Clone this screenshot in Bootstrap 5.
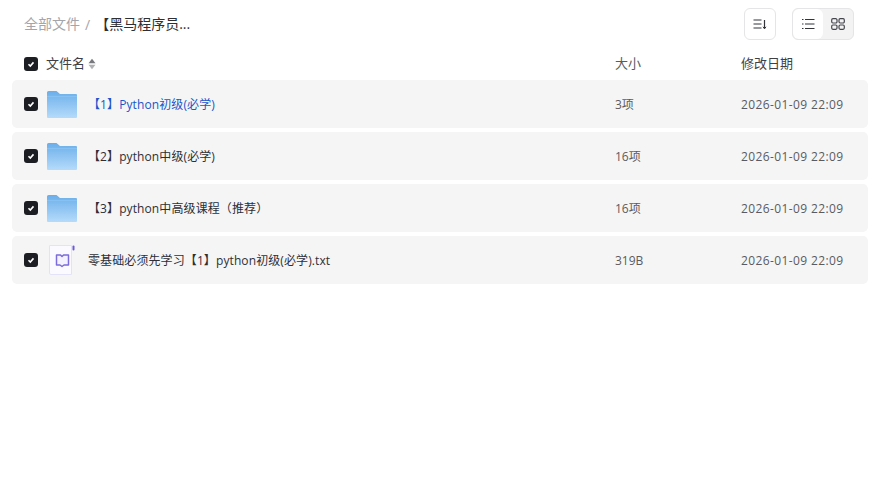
<!DOCTYPE html>
<html lang="zh-CN">
<head>
<meta charset="UTF-8">
<title>全部文件</title>
<link href="https://cdn.jsdelivr.net/npm/bootstrap@5.3.2/dist/css/bootstrap.min.css" rel="stylesheet">
<script src="https://cdn.jsdelivr.net/npm/bootstrap@5.3.2/dist/js/bootstrap.bundle.min.js"></script>
<style>
body { font-family: "Open Sans", "Noto Sans CJK SC", sans-serif; background: #fff; color: #2e2f35; font-size: 12px; }
.file-page { padding: 8px 10px 0 12px; }
.crumb-bar { height: 32px; padding-left: 12px; padding-right: 14px; font-size: 14px; margin-bottom: 8px; }
.crumb-root { color: #a4a5ab; padding-bottom: 2px; }
.crumb-sep { color: #a4a5ab; margin: 0 5px; }
.crumb-now { color: #2e2f35; padding-bottom: 2px; }
.tool-btn { width: 32px; height: 32px; border: 1px solid #e5e5e8; border-radius: 6px; background: #fff; margin-right: 16px; }
.view-group { width: 62px; height: 32px; border: 1px solid #e5e5e8; border-radius: 6px; background: #f3f3f4; overflow: hidden; }
.view-item { width: 30px; height: 30px; }
.view-on { background: #fff; border-radius: 6px; }
.head-row { height: 32px; padding-left: 12px; font-size: 13px; color: #3f4046; }
.file-row { height: 48px; padding-left: 12px; background: #f5f5f5; border-radius: 5px; margin-bottom: 4px; }
.tick { width: 14px; height: 14px; background: #1d1e24; border-radius: 3px; flex: none; }
.col-name { width: 591px; flex: none; }
.col-size { width: 126px; flex: none; color: #5a5b61; }
.col-date { color: #5a5b61; letter-spacing: .38px; }
.row-text { padding-top: 2px; }
.file-name { letter-spacing: .1px; padding-top: 2px; }
.name-gap { margin-left: 8px; }
.sort-mark { margin-left: 3px; }
.file-icon { width: 30px; height: 30px; margin-left: 9px; margin-right: 11px; flex: none; }
.is-link { color: #1a55c9; }
</style>
</head>
<body>
<div class="file-page">
  <div class="crumb-bar d-flex align-items-center">
    <span class="crumb-root">全部文件</span><span class="crumb-sep">/</span><span class="crumb-now">【黑马程序员...</span>
    <div class="ms-auto d-flex">
      <div class="tool-btn d-flex align-items-center justify-content-center">
        <svg width="16" height="16" viewBox="0 0 16 16" fill="none" stroke="#33343a" stroke-width="1.2"><path d="M1.500 4h8M1.500 8h8M1.500 12h8M12.500 4v8.500"/><path d="M11 10.800l1.500 2 1.500-2" stroke-width="1"/></svg>
      </div>
      <div class="view-group d-flex">
        <div class="view-item view-on d-flex align-items-center justify-content-center">
          <svg width="16" height="16" viewBox="0 0 16 16" fill="none" stroke="#33343a" stroke-width="1.2"><path d="M5 3.500h9.500M5 8h9.500M5 12.500h9.500M2 3.500h1.500M2 8h1.500M2 12.500h1.500"/></svg>
        </div>
        <div class="view-item d-flex align-items-center justify-content-center">
          <svg width="16" height="16" viewBox="0 0 16 16" fill="none" stroke="#45464c" stroke-width="1.2"><rect x="1.700" y="2.700" width="5.300" height="4.300" rx="1.200"/><rect x="9" y="2.700" width="5.300" height="4.300" rx="1.200"/><rect x="1.700" y="9" width="5.300" height="4.300" rx="1.200"/><rect x="9" y="9" width="5.300" height="4.300" rx="1.200"/></svg>
        </div>
      </div>
    </div>
  </div>

  <div class="head-row d-flex align-items-center">
    <div class="col-name d-flex align-items-center">
      <span class="tick d-flex align-items-center justify-content-center"><svg width="10" height="10" viewBox="0 0 10 10" fill="none" stroke="#fff" stroke-width="1.6"><path d="M2.500 5.200l1.800 1.800 3.200-3.600"/></svg></span>
      <span class="name-gap">文件名</span>
      <svg class="sort-mark" width="8" height="12" viewBox="0 0 8 12"><path d="M4 .8l3.500 4.400H.5z" fill="#77787d"/><path d="M4 11.200L.5 6.800h7z" fill="#b0b1b5"/></svg>
    </div>
    <div class="col-size">大小</div>
    <div>修改日期</div>
  </div>

  <div class="file-row d-flex align-items-center">
    <div class="col-name d-flex align-items-center">
      <span class="tick d-flex align-items-center justify-content-center"><svg width="10" height="10" viewBox="0 0 10 10" fill="none" stroke="#fff" stroke-width="1.6"><path d="M2.500 5.200l1.800 1.800 3.200-3.600"/></svg></span>
      <svg class="file-icon" viewBox="0 0 30 30"><defs><linearGradient id="fold1" x1="0" y1="0" x2="0" y2="1"><stop offset="0" stop-color="#6aaeea"/><stop offset="1" stop-color="#b5dbfa"/></linearGradient></defs><path d="M0 3.500Q0 2 1.500 2H9.500L13 5H29Q30 5 30 6V28Q30 29 29 29H1Q0 29 0 28Z" fill="url(#fold1)"/><path d="M0 7.500H30" stroke="#87c0f2" stroke-width="1"/></svg>
      <span class="file-name is-link">【1】Python初级(必学)</span>
    </div>
    <div class="col-size row-text">3项</div>
    <div class="col-date row-text">2026-01-09 22:09</div>
  </div>

  <div class="file-row d-flex align-items-center">
    <div class="col-name d-flex align-items-center">
      <span class="tick d-flex align-items-center justify-content-center"><svg width="10" height="10" viewBox="0 0 10 10" fill="none" stroke="#fff" stroke-width="1.6"><path d="M2.500 5.200l1.800 1.800 3.200-3.600"/></svg></span>
      <svg class="file-icon" viewBox="0 0 30 30"><path d="M0 3.500Q0 2 1.500 2H9.500L13 5H29Q30 5 30 6V28Q30 29 29 29H1Q0 29 0 28Z" fill="url(#fold1)"/><path d="M0 7.500H30" stroke="#87c0f2" stroke-width="1"/></svg>
      <span class="file-name">【2】python中级(必学)</span>
    </div>
    <div class="col-size row-text">16项</div>
    <div class="col-date row-text">2026-01-09 22:09</div>
  </div>

  <div class="file-row d-flex align-items-center">
    <div class="col-name d-flex align-items-center">
      <span class="tick d-flex align-items-center justify-content-center"><svg width="10" height="10" viewBox="0 0 10 10" fill="none" stroke="#fff" stroke-width="1.6"><path d="M2.500 5.200l1.800 1.800 3.200-3.600"/></svg></span>
      <svg class="file-icon" viewBox="0 0 30 30"><path d="M0 3.500Q0 2 1.500 2H9.500L13 5H29Q30 5 30 6V28Q30 29 29 29H1Q0 29 0 28Z" fill="url(#fold1)"/><path d="M0 7.500H30" stroke="#87c0f2" stroke-width="1"/></svg>
      <span class="file-name">【3】python中高级课程（推荐）</span>
    </div>
    <div class="col-size row-text">16项</div>
    <div class="col-date row-text">2026-01-09 22:09</div>
  </div>

  <div class="file-row d-flex align-items-center">
    <div class="col-name d-flex align-items-center">
      <span class="tick d-flex align-items-center justify-content-center"><svg width="10" height="10" viewBox="0 0 10 10" fill="none" stroke="#fff" stroke-width="1.6"><path d="M2.500 5.200l1.800 1.800 3.200-3.600"/></svg></span>
      <svg class="file-icon" viewBox="0 0 30 30"><path d="M2.500 .5H24.500V29.500H4Q2.500 29.500 2.500 28Z" fill="#fbfbff" stroke="#e4e2f8"/><rect x="25.500" y=".5" width="2" height="5" rx="1" fill="#6a5bd8"/><path d="M9.500 10H13.500L15 11.500L16.500 10H21.500V20H17L15 21.500L13 20H9.500Z" fill="#f4f2ff" stroke="#7b6bdc" stroke-width="1.500" stroke-linejoin="round"/></svg>
      <span class="file-name">零基础必须先学习【1】python初级(必学).txt</span>
    </div>
    <div class="col-size row-text">319B</div>
    <div class="col-date row-text">2026-01-09 22:09</div>
  </div>
</div>
</body>
</html>
